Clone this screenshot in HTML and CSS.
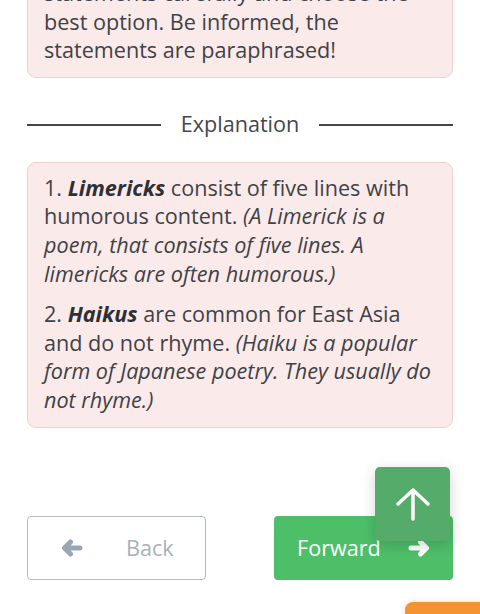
FILE: index.html
```html
<!DOCTYPE html>
<html lang="en">
<head>
<meta charset="utf-8">
<link rel="stylesheet" href="styles.css">
</head>
<body>
<main class="page">
  <div class="note note-top">
    <p>statements carefully and choose the<br>best option. Be informed, the<br>statements are paraphrased!</p>
  </div>

  <div class="divider"><span class="divider-line"></span><span class="divider-label">Explanation</span><span class="divider-line"></span></div>

  <div class="note">
    <p>1. <b><i>Limericks</i></b> consist of five lines with humorous content. <i>(A Limerick is a poem, that consists of five lines. A limericks are often humorous.)</i></p>
    <p>2. <b><i>Haikus</i></b> are common for East Asia and do not rhyme. <i>(Haiku is a popular form of Japanese poetry. They usually do not rhyme.)</i></p>
  </div>

  <div class="nav">
    <button class="btn btn-back">
      <svg class="ico" viewBox="0 0 22 18" width="22" height="18"><path d="M19 9H4M9.5 3L3.5 9l6 6" fill="none" stroke="currentColor" stroke-width="5" stroke-linecap="round" stroke-linejoin="round"/></svg>
      <span>Back</span>
    </button>
    <button class="btn btn-fwd">
      <span>Forward</span>
      <svg class="ico" viewBox="0 0 22 18" width="22" height="18"><path d="M3 9h15M12.5 3l6 6-6 6" fill="none" stroke="currentColor" stroke-width="5" stroke-linecap="round" stroke-linejoin="round"/></svg>
    </button>
  </div>
</main>

<button class="to-top" aria-label="Back to top">
  <svg viewBox="0 0 36 36" width="36" height="36"><path d="M18 33V4M3 18L18 4l15 14" fill="none" stroke="#fff" stroke-width="3.5" stroke-linecap="round" stroke-linejoin="round"/></svg>
</button>
<div class="corner-tab"></div>
</body>
</html>
```

FILE: styles.css
```css
html, body {
  margin: 0;
  padding: 0;
  background: #ffffff;
  overflow: hidden;
}
body {
  font-family: "Open Sans", "Liberation Sans", sans-serif;
  font-size: 21.6px;
  line-height: 28.6px;
  color: #404246;
  height: 614px;
  position: relative;
}
.page {
  margin: 0 27px;
  display: flex;
  flex-direction: column;
}
.note {
  background: #fbeaea;
  border: 1px solid #efcfcf;
  border-radius: 9px;
  padding: 11px 16px 12px;
}
.note-top {
  margin-top: -34px;
  padding-top: 12px;
}
.note p {
  margin: 0;
}
.note p + p {
  margin-top: 12px;
}
.note b {
  font-weight: 700;
  color: #2e3034;
}
.divider {
  display: flex;
  align-items: center;
  gap: 20px;
  height: 28px;
  margin: 33px 0 23px;
}
.divider-line {
  flex: 1;
  height: 2px;
  background: #43474b;
}
.divider-label {
  color: #43474b;
}
.nav {
  display: flex;
  justify-content: space-between;
  margin-top: 88px;
}
.btn {
  width: 179px;
  height: 64px;
  border-radius: 4px;
  font-family: inherit;
  font-size: 21.6px;
  display: flex;
  align-items: center;
  padding: 0;
  cursor: pointer;
}
.btn-back {
  background: #ffffff;
  border: 1px solid #b3bcc5;
  color: #a7b1bb;
  padding-left: 33px;
  gap: 43px;
}
.btn-back .ico {
  color: #98a7b5;
}
.btn-fwd {
  background: #4dbf69;
  border: none;
  color: #ffffff;
  padding-left: 23px;
  gap: 27px;
}
.to-top {
  position: absolute;
  left: 375px;
  top: 467px;
  width: 75px;
  height: 74px;
  border: none;
  border-radius: 5px;
  background: #55ab69;
  box-shadow: 0 4px 14px rgba(0, 0, 0, 0.18);
  display: flex;
  align-items: center;
  justify-content: center;
  padding: 0;
}
.corner-tab {
  position: absolute;
  left: 405px;
  top: 602px;
  width: 80px;
  height: 20px;
  background: #f39332;
  border-top-left-radius: 8px;
  box-shadow: 0 0 6px rgba(240, 150, 50, 0.3);
}
```
